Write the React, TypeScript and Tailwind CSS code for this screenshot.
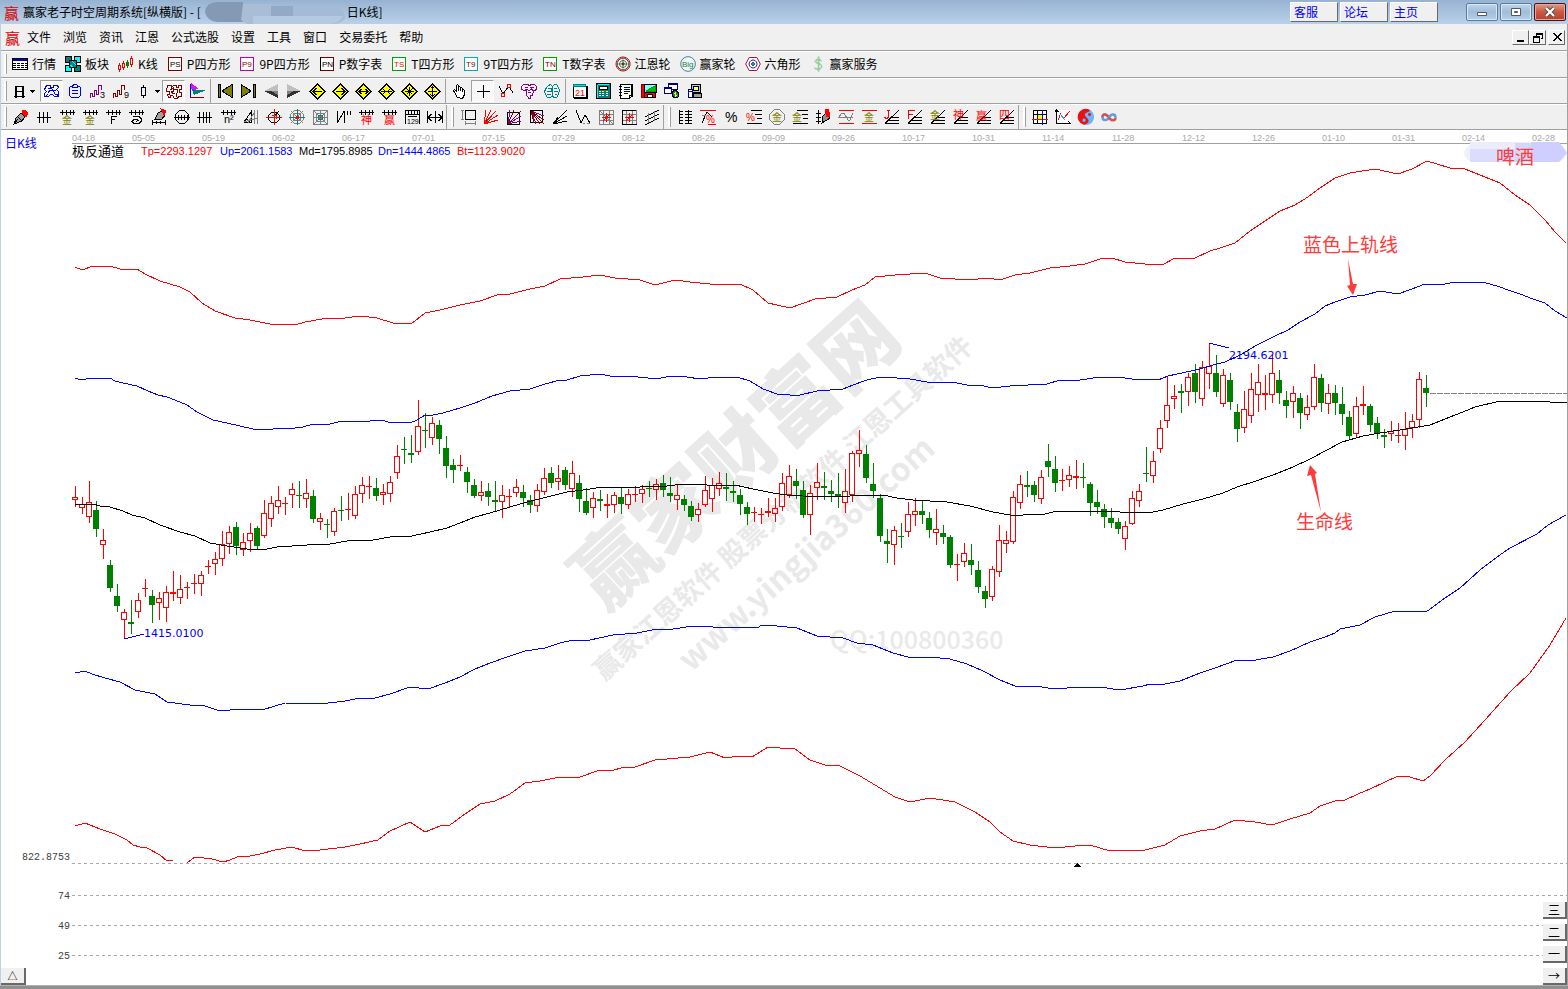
import React from "react";

type Shape = [stroke: string, d: string, fill?: string];
type Label = [text: string, x: number, y: number, size: number, color: string];
type IconDef = { p?: Shape[]; t?: Label[]; smooth?: boolean };

const K = "#000000";
const R = "#ff0000";
const OL = "#808000";
const G = "#808080";
const TE = "#008080";
const PU = "#800080";
const BR = "#800000";
const BL = "#0000ff";

const TICKS = "M1 3.5h15M3.5 1v5M7.5 1v5M11.5 1v5M14.5 1v5";
const DIAMOND: Shape = [K, "M8.5 1L16 8.5L8.5 16L1 8.5Z", "#ffff00"];
const FAN = "M1 14.5h14M1 14.5L15 1M5 11.5h10M8 8.5h7";
const PEN: Shape[] = [
  [K, "M1 15L3 9L8 4L12 8L9 12Z", "#a0a0a0"],
  [K, "M1 15L5 10M5 8L9 12", "none"],
  [R, "M9 2L12 1L15 4L13 8L9 4Z", R],
];

const ICONS: Record<string, IconDef> = {
  // quote bar
  list: {
    p: [
      [K, "M.5 2.5h15v11H.5Z", "#ffffff"],
      ["#0000c0", "M1 3.5h14M1 4.5h14", "none"],
      [K, "M1 7.5h14M1 9.5h14M1 11.5h14", "none"],
      ["#ffffff", "M4.5 6v7M8.5 6v7M12.5 6v7", "none"],
    ],
  },
  blocks: {
    p: [
      [K, "M.5.5h6v6h-6Z", TE],
      [K, "M9.5.5h6v6h-6Z", "#00ffff"],
      [K, "M.5 9.5h6v6h-6Z", "#00ffff"],
      [K, "M9.5 9.5h6v6h-6Z", TE],
      [K, "M4.5 4.5h7v7h-7Z", "#008888"],
      ["#00ffff", "M7 5l4 4M5 9l3 2", "none"],
    ],
  },
  kline: {
    p: [
      [R, "M.5 9.5h2v4h-2ZM1.5 7v2M1.5 14v2", "#fff"],
      [R, "M4.5 7.5h2v4h-2ZM5.5 5v2M5.5 12v2", "#fff"],
      ["#008000", "M9.5 4v8", "none"],
      ["#008000", "M8.5 6.5h2v3h-2Z", "#008000"],
      [R, "M12.5 2.5h2v6h-2ZM13.5 0v2M13.5 9v2", "#fff"],
    ],
  },
  PS: { p: [[BR, "M1.5 1.5h13v13h-13Z", "#fff"]], t: [["PS", 3, 11, 8, K]] },
  P9: { p: [["#c000c0", "M1.5 1.5h13v13h-13Z", "#fff"]], t: [["P9", 3, 11, 8, BR]] },
  PN: { p: [[BR, "M1.5 1.5h13v13h-13Z", "#fff"], [K, "M1.5 1v14"]], t: [["PN", 3, 11, 8, K]] },
  TS: { p: [["#00a000", "M1.5 1.5h13v13h-13Z", "#fff"]], t: [["TS", 3, 11, 8, R]] },
  T9: { p: [["#00b0b0", "M1.5 1.5h13v13h-13Z", "#fff"]], t: [["T9", 3, 11, 8, BR]] },
  TN: { p: [["#00a000", "M1.5 1.5h13v13h-13Z", "#fff"]], t: [["TN", 3, 11, 8, BR]] },
  wheel: {
    smooth: true,
    p: [
      ["#8b1a1a", "M8 1a7 7 0 1 0 .1 0Z", "#f4f4f4"],
      ["#8b1a1a", "M8 2.2a5.8 5.8 0 1 0 .1 0Z"],
      ["#2e7d52", "M8 4.5a3.5 3.5 0 1 0 .1 0ZM8 3.5v9M3.5 8h9"],
      ["#8b1a1a", "M8 7a1 1 0 1 0 .1 0Z", "#8b1a1a"],
    ],
  },
  big: { smooth: true, p: [["#3c7fa8", "M8 .7a7.3 7.3 0 1 0 .1 0Z", "#f0f6f4"]], t: [["Big", 2, 11, 8, "#1e7b47"]] },
  hex: {
    smooth: true,
    p: [
      ["#a01830", "M4.2 1.5h7.6L15.3 8l-3.5 6.5H4.2L.7 8Z", "#fff"],
      ["#2020b0", "M8 4a4 4 0 1 0 .1 0Z"],
      ["#2020b0", "M8 6.5a1.5 1.5 0 1 0 .1 0Z", "#40a060"],
    ],
  },
  dollar: {
    smooth: true,
    p: [["#8fcb94", "M11.5 4.5C10 2.5 5 2.700 5 5.200S11.500 7.500 11.500 10.500S5.500 13.500 4.500 11.500M4.500 12.200C6 14.500 12.500 13.500 12 10M8.200.5v15M9 .5v15M11.500 5.200C9.500 3.500 5.500 3.500 6 5.800C7 7.500 11 7.500 12 9.500"]],
  },

  // navigation bar
  day: { p: [[K, "M4.5 3v12M5.5 3v12M11.5 3v12M12.5 3v12M4 3.5h9M4 8.5h9M3 13.5h11"]] },
  cloudBlue: {
    p: [[BL, "M2.5 2.5h4v2h3v-2h4l1 2l-2 2l2 2v3l-1 2h-3l-2-2h-2l-2 2h-4v-3l2-2l-2-2ZM4 5h3l2 2h3M4 10l2-3h3l2 4h3M1 14l3-3M15 14l-3-3"]],
  },
  clip: { p: [[BL, "M5.5 3.5h-2l-1 1v8l2 2h7l2-2v-8l-1-1h-2M5.5 4.5v-2l2-1h2l1 1v2ZM5 7.5h6M5 10.5h6"]] },
  wave3: { p: [[PU, "M.5 15v-5h2v3h2v-6h2v4h2v-9h3v3M11.5 2v5"]], t: [["3", 10, 15, 9, K]] },
  wave9: { p: [[BR, "M.5 15v-5h2v3h2v-6h2v4h2v-9h3v3M11.5 2v5"]], t: [["9", 11, 15, 9, K]] },
  candle: { p: [[K, "M5.5 4.5h4v8h-4ZM7.5 2v2M7.5 13v2"]] },
  cloudBrown: {
    p: [[BR, "M1.5 2.5h4v2l2-2h3v2h2v-2h3v4h-2v3h2v4h-3l-1 2h-3l-2-3h-2v2h-2l-1-3h2v-3h-3ZM4 7l3-2v3h-2l2 3M8 6h3l1 3l-2 2l1 3M7 10h2"]],
  },
  flag: { p: [["none", "M2 0L10 6H2Z", "#ff00ff"], ["none", "M3 6L16 7.500L5 12Z", TE], [BL, "M1.5 1v13"], [BR, "M1 14.5h14"]] },
  first: { p: [[K, "M1 1.5h2v13h-2Z", OL], [K, "M15 1.5L5 8l10 6.5Z", OL]] },
  last: { p: [[K, "M13 1.5h2v13h-2Z", OL], [K, "M1 1.5L11 8L1 14.5Z", OL]] },
  prev: { p: [["none", "M15 1L1 8h14Z", "#c0c0c0"], ["none", "M1 8l14 7V8Z", "#303030"], ["none", "M8 8h7v4Z", "#808080"]] },
  next: { p: [["none", "M1 1l14 7H1Z", "#c0c0c0"], ["none", "M15 8L1 15V8Z", "#303030"], ["none", "M1 8h7l-7 4Z", "#808080"]] },
  dLeft: { p: [DIAMOND, [K, "M4 8.5h9M7.5 5L4 8.5l3.5 3.500"]] },
  dRight: { p: [DIAMOND, [K, "M4 8.5h9M9.5 5l3.500 3.500l-3.500 3.500"]] },
  dBoth: { p: [DIAMOND, [K, "M3 8.5h11M6.5 6L4 8.5l2.500 2.500M10.5 6l2.500 2.500l-2.500 2.500"]] },
  dIn: { p: [DIAMOND, [K, "M3 8.5h11M5 6l2.500 2.500L5 11M12 6L9.500 8.500L12 11"]] },
  dStar: { p: [DIAMOND, [K, "M4 8.5h9M8.5 4v9M5.5 5.500l6 6M11.5 5.500l-6 6"]] },
  dFour: { p: [DIAMOND, [K, "M4 8.5h9M8.5 3v11M6.5 5.500l2-2l2 2M6.5 11.500l2 2l2-2"]] },
  hand: { p: [[K, "M5.5 14.5L2.5 9.5l-1-2l1-1l2 2v-6l1-1l1 1v5v-3l1-1l1 1v3v-2l1-1l1 1v3v-1l1-1l1 1v4l-2 4Z", "#fff"]] },
  cross: { p: [[K, "M8.5 2v13M2 8.5h13"]] },
  zigRed: { p: [[K, "M1 3l4 8l5-7l2 1l3 5"], [R, "M3.5 10.5h3v3h-3ZM9.5 1.5h3v3h-3Z"]] },
  cloudPurple: { p: [[PU, "M2.5 1.5h4l2 1l2-1h3l2 2v3l-2 1h-2l-1-2l-2 2l-3-1l-2 1l-3-1v-3ZM5.5 7v5l2 3h2v-3h2l1-4M4 4h3M9 4h4M7 9h3"]] },
  cloudTeal: { p: [[TE, "M4.5 2.5l2-1l2 2l2-2h2l2 3l1 3l-1 4l-2 3h-3l-1-2l-2 2h-3l-2-3l-1-3l2-4ZM4 5h3v3h-4M8.5 3v10M10 5h3M10 8h4M11 11h2M3 11h4"]] },
  cal: { p: [[K, "M1.5 3.5h13v11h-13Z", "#fff"], [TE, "M1.5 1.5h12v2h-12Z", "#00e0e0"], [K, "M15 3v13M2 15.5h13"]], t: [["21", 3, 13, 9, R]] },
  calc: { p: [[K, "M1.5.5h14v15h-14Z", TE], ["#00ffff", "M3 1.5h11M2.5 2v13"], [K, "M4.5 3.5h8v3h-8Z", "#ffffff"], ["#ffff00", "M4 8.5h2M7 8.5h2M11 8.5h2"], ["#fff", "M4 10.5h2M7 10.5h2M11 10.5h2M4 12.5h2M7 12.5h2M11 12.5h2"]] },
  note: { p: [[K, "M2.5 1.5h12v11l-3 3h-9Z", "#fff"], [K, "M1 3.5h3M1 6.5h3M1 9.5h3M1 12.5h3M11 15v-3h4M14.5 1v13M13.5 1v11"], ["#000080", "M6 4.5h6M6 6.5h6M6 8.5h6M6 10.5h4"]] },
  disk: { p: [[BR, "M.5 1.5h4v13h-4Z", R], [K, "M3.5 1.5h12v8h-12Z", "#80ffff"], ["#00a000", "M5 8l9-5v6Z", "#00c000"], [K, "M3.5 9.5h11v5h-11Z", R], [K, "M6.5 11.5h5v3h-5Z", "#fff"]] },
  screens: { p: [["#000080", "M4.5.5h9v6h-9Z", "#fff"], ["#000080", "M.5 4.5h7v6h-7Z", "#fff"], ["#000080", "M1 5.5h6M5 1.5h8"], [K, "M8 9l3-2l4 3l-1 4l-4 1l-2-3Z", TE], ["#ffff00", "M10 10l3 3M12 9l-1 5"]] },
  pc: { p: [[K, "M4.5 1.5h9v8h-9Z", "#c0c0c0"], [K, "M6.5 3.5h5v4h-5Z", "#ffff80"], ["#000080", "M1.5 6.5h4v8h-4Z", "#fff"], [K, "M6.5 10.5h8v4h-8Z", "#a0a0a0"], [BL, "M2 8.5h3"]] },

  // drawing bar
  pen: { p: PEN },
  ticks: { p: [[K, "M1 8.5h14M3.5 3v11M7.5 3v11M11.5 3v11"]] },
  tickGold: { p: [[K, TICKS]], t: [["金", 3, 15, 10, OL]] },
  tickF: { p: [[K, TICKS], [K, "M6.5 15v-8h5M6 10.5h4"]] },
  tickSpiral: { p: [[K, TICKS], [K, "M5 7.5h6l2 2v3l-2 2h-5l-2-2l2-2h3l1 1l-2 1"]] },
  penRuler: { p: [[K, "M4 10L7 4L11 2l3 4l-3 4Z", "#a0a0a0"], [R, "M10 0l5 2l-2 4Z", R], [K, "M1 13.5h14M1.5 11v5M5.5 12v3M9.5 12v3M14.5 11v5"]] },
  tickCircle: { p: [[K, "M5.5 1.5h5l4 4v5l-4 4h-5l-4-4v-5ZM0 8.5h16M4.5 6v5M7.5 6v5M10.5 6v5M13.5 6v5"]] },
  ticks2: { p: [[K, "M0 8.5h15M2.5 3v11M6.5 3v11M9.5 3v11M12.5 3v11"]] },
  n2: { p: [[K, TICKS]], t: [["n²", 4, 14, 11, K]] },
  triLines: { p: [[K, "M1 13L8 3v11M1 13h6l-4-3"], [G, "M5 14L12 2M11.5 1v14M14.5 1v14M1 13L14 9"]] },
  redCircle: { p: [[K, "M5.5 3.5h5l3 3v4l-3 3h-5l-3-3v-4ZM8 8L13 2"], [R, "M8.5 0v16M0 8.5h16M6 6h4v4"]] },
  web: { p: [[G, "M5.5 1.5h5l4 4v5l-4 4h-5l-4-4v-5ZM5.5 4.5h5l1 1v5l-1 1h-5l-1-1v-5ZM2 2l12 12M14 2L2 14"], [TE, "M8.5 0v16M0 8.5h16"], [R, "M7.5 7.500h2v2h-2Z", R]] },
  webSquare: { p: [[G, "M1.5 1.5h14v14h-14ZM4.5 4.5h8v8h-8ZM2 2l13 13M15 2L2 15M8.5 1v15M1 8.5h15"], [TE, "M6.5 6.5h4v4h-4Z"], [R, "M8 8.500h1"]] },
  nMarks: { p: [[K, "M2.5 2v12L9 2v12M12.5 2v4M15.5 2v4"]] },
  tickShen: { p: [[K, TICKS]], t: [["神", 3, 15, 11, R]] },
  tickYing: { p: [[K, TICKS]], t: [["赢", 3, 15, 11, R]] },
  ruler: { p: [[K, "M1.5 15V1.5h14V15M1 5.5h15M4.5 2v4M7.5 2v4M10.5 2v4M13.5 2v4M4 7.5h9"]], t: [["129", 3, 15, 7, K]] },
  span: { p: [[K, "M.5 2v12M15.5 2v12M8.5 2v12M1 8.5h14M4.5 5L1 8.500L4.500 12M11.5 5L15 8.500L11.500 12"]] },

  boxDims: { p: [[K, "M5.5 1.5h10v9h-10Z"], [G, "M1 1.5h3M1 10.5h3M2.5 2v8M5.5 12v4M15.5 12v4M6 14.5h9"]] },
  fanRed: { p: [[K, "M1 15L4 10"], [R, "M1 15L3 1M1 15L8 1M1 15L13 2M1 15L15 6M1 15L15 11"]] },
  fanBox: { p: [[K, "M1.5 3.5h12v12h-12Z"], [PU, "M2 15L4 1M2 15L15 7M2 15L15 12"], [BR, "M2 15L8 1M2 15L15 2"]] },
  fanBoxDown: { p: [[K, "M1.5 1.5h12v12h-12Z"], [PU, "M2 2l5 13M2 2l13 5"], [BR, "M2 2l13 13M2 2l9 13M2 2l13 9M2 2l3 12"]] },
  fanBlack: { p: [[K, "M1 15L15 1M1 15L15 7M1 15L15 12M1 15L6 8"]] },
  vZig: { p: [[K, "M1 1l5 13l4-8l5 8"], [G, "M8 14h2M12 14h3"]] },
  gridRed: { p: [[G, "M1.5 1.5h14v14h-14ZM1 5.5h15M1 11.5h15M5.5 1v15M11.5 1v15M2 2l13 13"], [R, "M8.5 4v9M4 8.5h9M5 12L12 5"]] },
  gridDark: { p: [[G, "M1 5.5h15M1 11.5h15M5.5 1v15M11.5 1v15M15.5 1v15"], [K, "M1.5 1v14.5h14M1 1.500h14"], [R, "M8.5 4v9M4 8.5h9M5 12L12 5"]] },
  slants: { p: [[K, "M1 8L15 1M1 12L15 5M1 16L15 9"], [G, "M4.5 4v10M10.5 2v10"]] },

  ladder: { p: [[K, "M2.5 1v14M11.5 1v14M2 2.5h4M2 5.5h4M2 8.5h4M2 11.5h4M2 14.5h4M8 2.5h7M8 5.5h7M8 8.5h7M8 11.5h7M8 14.5h7"]] },
  pctZ: { p: [[R, "M0 1.5h16M8 15.5h8"], [K, "M2 14L7 3l5 5"], [G, "M2 6h4"]], t: [["%", 6, 14, 10, R]] },
  pct: { t: [["%", 2, 13, 14, K]] },
  pctLines: { p: [[K, "M5 1.5h11M9 5.5h7M11 9.5h5M1 14.5h15"]], t: [["%", 0, 12, 10, R]] },
  goldCircle: { p: [[G, "M5.5.5h5l5 5v5l-5 5h-5l-5-5v-5Z"]], t: [["金", 3, 12, 10, OL]] },
  goldLines: { p: [[K, "M5 1.5h11M10 5.5h6M11 9.5h5M1 14.5h15"]], t: [["金", 0, 12, 10, OL]] },
  penLadder: { p: [[K, "M3.5 1v14M1 4.5h5M1 8.5h5M1 12.5h5"], [K, "M7 14l1-7l4-4l3 6Z", "#909090"], [R, "M10 1l3-1l2 7l-3 1Z", R]] },
  waveRed: { p: [[R, "M1 1.5h15M1 14.5h15"], [G, "M0 9l4-5h2l4 7h2l3-7M1 8.5h14"]] },
  goldRed: { p: [[R, "M1 1.5h15M1 14.5h15"]], t: [["金", 3, 12, 10, OL]] },
  fanJ: { p: [[K, FAN], [R, "M4.500 1v7l-1 1h-2l-1-1M3 1.500h3"]] },
  fanF: { p: [[K, FAN], [R, "M1.5 10V1.5h6M1 5.5h5"]] },
  fanGold: { p: [[K, FAN]], t: [["金", 0, 10, 10, OL]] },
  fanShen: { p: [[K, FAN]], t: [["神", 0, 10, 11, R]] },
  fanYing: { p: [[K, FAN]], t: [["赢", 0, 11, 11, R]] },
  fanFour: { p: [[K, FAN]], t: [["四", 0, 10, 11, R]] },

  table: { p: [[K, "M1.5 1.5h13v13h-13Z", "#fff"], [K, "M1 5.5h14M5.500 1v14"], ["#ffff00", "M6.5 6.5h3v3h-3Z", "#ffff00"], [R, "M0 10.5h16"], [BL, "M10.5 1v15"]] },
  plot: { p: [["#fff", "M1 1h14v14H1Z", "#fff"], [K, "M1.5 1v13.5h14M0 3l1.500-2l2 2M13 12l2.500 2.500"], [R, "M3 11l3-7M9 9l6-7"], ["#4090e0", "M5 5l5 6"]] },
  taiji: {
    smooth: true,
    p: [
      ["none", "M8 0a8 8 0 1 0 .1 0Z", "#6ab4ff"],
      ["none", "M11 .6A8 8 0 1 0 6 15.700C11 14.500 11.500 11.500 9.500 9.500S5.500 5.500 8 4S13 3 11 .6Z", "#ee1010"],
      ["none", "M11.500 4a1.500 1.500 0 1 0 .1 0Z", "#ee1010"],
      ["none", "M6 9.500a1.700 1.700 0 1 0 .1 0Z", "#6ab4ff"],
    ],
  },
};

function Icon({ name }: { name: string }) {
  if (name === "infinity") {
    return (
      <svg className="size-4 shrink-0" viewBox="0 0 16 16" fill="none" strokeWidth="2.500" aria-hidden="true">
        <path stroke="#5aa0e0" d="M8 8.500C6 5 1.500 4 1.500 8S6 12 8 8.500" />
        <path stroke="#e05050" d="M1.500 8C1.500 4.500 5.500 4.500 8 8.500S14.500 12 14.500 8.500" />
        <path stroke="#5aa0e0" d="M8 8.500C10 4.500 14.500 4.500 14.500 8.500" />
      </svg>
    );
  }
  const icon = ICONS[name];
  return (
    <svg className="size-4 shrink-0 overflow-visible" viewBox="0 0 16 16" shapeRendering={icon.smooth ? "auto" : "crispEdges"} aria-hidden="true">
      {icon.p?.map(([stroke, d, fill], i) => (
        <path key={i} d={d} stroke={stroke} fill={fill ?? "none"} />
      ))}
      {icon.t?.map(([text, x, y, size, color]) => (
        <text key={text} x={x} y={y} fontSize={size} fill={color} className="font-['Liberation_Sans','Noto_Sans_CJK_SC',sans-serif]">
          {text}
        </text>
      ))}
    </svg>
  );
}

function Logo() {
  return <span className="w-[15px] shrink-0 text-[15px] leading-none text-[#d80000]" aria-hidden="true">赢</span>;
}

function Grip() {
  return <span className="h-5 w-[3px] shrink-0 border-r border-[#a0a0a0] bg-white" />;
}

function ToolButton({ name, active }: { name: string; active?: boolean }) {
  return (
    <button
      type="button"
      aria-label={name}
      className={
        active
          ? "flex h-[22px] w-[23px] shrink-0 items-center justify-center border border-t-[#a0a0a0] border-r-white border-b-white border-l-[#a0a0a0] bg-[#f8f8f8]"
          : "flex h-[22px] w-[23px] shrink-0 items-center justify-center"
      }
    >
      <Icon name={name} />
    </button>
  );
}

function DropArrow({ label }: { label: string }) {
  return (
    <button type="button" aria-label={label} className="flex w-[7px] shrink-0 justify-start">
      <svg className="h-[3px] w-[5px]" viewBox="0 0 5 3" shapeRendering="crispEdges" aria-hidden="true">
        <path d="M0 0h5L2.500 3Z" />
      </svg>
    </button>
  );
}

const MENUS = ["文件", "浏览", "资讯", "江恩", "公式选股", "设置", "工具", "窗口", "交易委托", "帮助"];

const QUOTES = [
  ["list", "行情"],
  ["blocks", "板块"],
  ["kline", "K线"],
  ["PS", "P四方形"],
  ["P9", "9P四方形"],
  ["PN", "P数字表"],
  ["TS", "T四方形"],
  ["T9", "9T四方形"],
  ["TN", "T数字表"],
  ["wheel", "江恩轮"],
  ["big", "赢家轮"],
  ["hex", "六角形"],
  ["dollar", "赢家服务"],
];

const NAV = [
  ["first", "last", "prev", "next", "dLeft", "dRight", "dBoth", "dIn", "dStar", "dFour"],
  ["hand", "cross", "zigRed", "cloudPurple", "cloudTeal"],
  ["cal", "calc", "note", "disk", "screens", "pc"],
];

const DRAW = [
  ["pen", "ticks", "tickGold", "tickGold", "tickF", "tickSpiral", "penRuler", "tickCircle", "ticks2", "n2", "triLines", "redCircle", "web", "webSquare", "nMarks", "tickShen", "tickYing", "ruler", "span"],
  ["boxDims", "fanRed", "fanBox", "fanBoxDown", "fanBlack", "vZig", "gridRed", "gridDark", "slants"],
  ["ladder", "pctZ", "pct", "pctLines", "goldCircle", "goldLines", "penLadder", "waveRed", "goldRed", "fanJ", "fanF", "fanGold", "fanShen", "fanYing", "fanFour"],
  ["table", "plot", "taiji", "infinity"],
];

const DATES = [
  "05-05", "05-19", "06-02", "06-17", "07-01", "07-15", "07-29", "08-12", "08-26", "09-09", "09-26",
  "10-17", "10-31", "11-14", "11-28", "12-12", "12-26", "01-10", "01-31", "02-14", "02-28",
];

// one bar per trading day: direction, high, body top, body bottom, low
const BARS = `
r486,497,500,507 r497,504,508,514 r481,502,517,523 g501,510,529,537 r529,540,545,559 g560,565,588,592
g584,596,606,612 r609,612,620,639 g600,622,624,634 r593,600,612,618 r579,588,589,597 g590,596,605,623
r592,598,603,620 r586,592,608,622 r571,592,594,601 r575,589,598,604 r582,587,588,599 r574,583,584,594
r571,575,584,596 r560,566,567,574 r552,559,564,575 r531,544,559,566 r526,532,544,554 g522,527,546,555
r533,542,550,556 r523,533,541,552 g526,528,546,549 r500,513,536,538 r496,503,519,527 r486,500,507,514
r497,503,504,515 r483,489,495,508 g481,495,496,508 r479,493,499,508 g490,496,519,523 r513,518,522,530
g519,524,525,538 r508,511,532,536 g496,510,511,521 r493,509,510,520 r486,494,516,519 r477,485,494,503
r476,486,487,499 g478,488,496,501 r484,492,495,505 r476,482,494,502 r445,456,473,479 g437,449,450,464
g435,453,455,463 r400,426,452,455 g413,430,431,448 r417,423,438,445 g420,425,439,454 g436,448,466,478
g459,465,470,483 r455,465,466,471 g467,472,482,493 g479,485,496,498 r481,492,496,501 g483,491,497,506
g481,500,502,511 r485,495,502,518 r489,496,497,508 r479,487,493,497 g485,492,498,507 g495,500,505,513
r484,490,506,512 r468,478,492,495 g467,473,483,488 r465,478,482,490 g467,470,485,490 r461,473,489,497
g475,483,499,512 g488,501,513,515 r492,498,508,518 g490,499,501,511 r494,504,506,518 r492,495,505,513
g488,497,504,514 r489,494,505,509 r486,494,495,502 r485,489,494,503 g481,488,489,497 r479,484,490,500
g475,483,490,497 g477,493,496,502 r485,495,500,510 g495,499,505,511 g501,506,517,521 r503,509,515,522
r476,490,505,507 r478,485,499,512 r472,483,489,496 g473,487,489,501 g481,491,493,502 g489,495,504,515
g502,507,514,525 r507,512,513,522 r508,514,515,524 r498,511,513,517 r498,508,514,522 r473,483,507,511
r465,476,495,498 g469,481,486,499 g481,490,515,518 r485,493,515,535 r463,482,488,500 g472,486,488,500
g480,491,494,502 g473,494,496,508 r469,491,503,513 r451,453,495,502 r430,450,454,467 g445,454,478,483
g463,484,491,498 g494,498,536,542 g529,541,544,563 r526,530,545,565 g523,536,537,548 r502,514,532,537
r498,511,515,526 g500,511,515,524 g512,518,530,538 r509,529,533,545 g525,533,537,544 g535,537,565,568
r554,564,565,581 r543,553,562,567 g544,560,565,575 g561,570,587,593 g586,591,599,608 r566,569,597,601
r525,540,572,577 r531,540,544,553 r491,497,542,544 r475,484,503,509 g471,485,487,497 g481,485,495,502
r470,477,499,504 g444,461,467,477 g456,469,483,492 r469,480,481,491 r466,475,480,487 r460,476,478,489
g463,477,478,488 g482,484,503,516 g490,502,507,514 g504,509,517,528 g508,518,523,528 g518,522,529,534
r521,526,539,550 r491,498,524,525 r484,491,501,507 g447,473,474,482 r451,461,476,483 r420,428,449,453
r377,405,421,428 r385,396,399,409 g384,391,393,413 r373,377,392,406 g364,373,392,403 r361,367,399,406
r343,366,374,389 g355,373,392,397 r369,375,404,407 g373,380,402,410 g404,412,429,442 r391,409,428,433
r373,389,416,423 r364,382,395,412 r375,393,395,410 r355,373,395,403 g370,380,393,404 g391,400,406,418
r386,393,402,418 g393,398,413,429 r395,407,415,420 r364,377,407,410 g374,378,403,412 r384,393,404,414
g385,393,403,415 g387,404,414,425 g411,417,436,439 r397,406,434,437 r386,404,406,415 g404,406,425,432
g417,423,433,439 g429,435,437,448 r421,431,434,441 r423,435,436,443 r412,429,436,450 r414,421,428,438
r372,379,420,428 g375,388,393,407`;

const CANDLES = BARS.trim().split(/\s+/).map((bar, i) => {
  const [high, top, bottom, low] = bar.slice(1).split(",").map(Number);
  return { x: 75 + i * 7, up: bar[0] === "r", high, top, bottom, low };
});

const CURVES = [
  {
    color: R,
    points:
      "75,267 82,270 93,266 110,266 120,269 137,269 145,274 160,281 180,287 190,292 202,303 215,311 235,318 250,320 270,324 295,325 305,322 322,319 345,318 360,316 377,318 393,323 411,324 425,313 440,310 460,305 480,301 497,295 510,294 530,289 545,286 560,279 583,277 600,275 615,278 640,280 655,285 675,280 690,282 720,285 740,284 753,290 768,303 790,308 815,299 837,297 852,290 865,285 875,277 895,275 925,273 940,278 970,280 987,278 1000,280 1015,275 1030,273 1050,268 1070,266 1085,264 1100,259 1112,258 1125,262 1145,264 1162,265 1175,258 1195,258 1210,251 1220,248 1235,243 1250,231 1265,221 1280,211 1295,205 1308,197 1320,188 1335,178 1350,173 1375,169 1398,174 1412,169 1427,161 1450,168 1465,169 1480,175 1500,183 1515,195 1530,205 1545,220 1555,232 1566,243",
  },
  {
    color: BL,
    points:
      "75,378 81,380 91,378 110,378 115,381 123,383 137,386 148,391 158,395 167,397 180,402 187,405 197,412 213,420 227,423 240,426 253,429 273,429 278,428 287,429 303,427 313,424 330,424 338,422 370,421 383,420 390,423 398,422 410,423 417,420 425,415 433,415 443,413 460,408 475,403 492,396 510,391 530,389 545,384 560,380 567,380 580,376 600,374 610,376 638,377 657,379 670,376 687,377 700,379 717,377 737,377 750,381 763,389 777,394 790,395 800,395 817,391 843,389 853,385 867,380 880,377 897,378 910,379 927,382 957,383 967,385 980,385 992,388 1010,386 1047,384 1060,380 1080,380 1100,377 1117,377 1140,380 1147,379 1158,380 1168,376 1200,369 1213,365 1225,362 1240,355 1257,345 1273,337 1288,330 1300,322 1315,314 1325,306 1335,302 1350,297 1365,295 1380,291 1398,294 1412,289 1425,284 1440,285 1455,282 1482,282 1490,284 1500,287 1508,290 1520,294 1533,299 1545,303 1555,311 1567,318",
  },
  {
    color: K,
    points:
      "75,504 93,504 100,506 110,507 123,511 132,515 145,518 160,525 180,532 195,536 210,543 227,546 247,549 267,549 277,547 307,545 330,544 347,541 373,540 390,537 412,536 430,532 447,528 460,523 475,517 490,513 510,507 527,502 547,497 567,492 583,490 603,487 640,487 667,486 683,484 707,485 735,485 753,489 773,493 787,495 803,496 850,496 863,495 883,495 897,498 913,500 947,502 970,506 993,512 1010,515 1023,515 1045,514 1053,512 1080,511 1100,511 1120,512 1133,513 1153,512 1163,510 1183,504 1203,499 1223,493 1237,487 1253,482 1273,475 1293,467 1310,459 1327,450 1342,442 1363,436 1380,433 1400,430 1430,425 1450,417 1463,412 1475,407 1500,401 1547,401 1550,402 1567,402",
  },
  {
    color: BL,
    points:
      "75,673 85,671 92,674 105,678 120,682 135,690 145,692 155,694 167,702 190,705 205,706 220,711 240,709 262,710 285,703 320,704 345,701 360,698 375,698 390,694 410,687 428,689 445,683 460,677 475,669 490,663 510,656 525,651 545,648 560,643 573,640 590,640 613,635 637,633 657,629 673,629 693,626 707,626 713,627 727,628 737,627 757,628 762,625 777,626 797,628 817,636 843,638 857,643 873,645 893,653 908,657 930,657 950,659 967,664 983,671 1000,680 1015,686 1035,686 1055,689 1080,687 1100,687 1120,690 1143,686 1150,684 1165,684 1180,681 1200,673 1215,668 1237,660 1250,661 1273,657 1290,651 1310,642 1325,637 1335,633 1340,629 1360,625 1375,617 1395,611 1410,611 1426,612 1445,598 1460,588 1480,570 1497,557 1510,548 1537,534 1548,525 1566,515",
  },
  {
    color: R,
    points:
      "75,826 85,823 100,829 115,834 127,840 133,845 140,847 147,848 160,855 167,861 173,860",
  },
  {
    color: R,
    points:
      "187,863 195,857 212,859 223,862 230,860 237,857 250,856 260,854 275,850 292,847 305,851 320,850 345,847 360,844 378,840 390,831 410,822 425,832 440,826 450,825 465,814 480,804 495,801 510,794 525,783 540,781 560,777 580,777 600,770 610,771 625,767 635,767 655,760 690,757 710,752 725,758 740,756 752,757 768,747 780,748 795,749 810,760 825,765 840,766 860,776 875,785 895,797 910,802 930,798 955,802 975,812 990,822 1000,832 1013,841 1030,845 1055,848 1075,846 1090,845 1110,851 1145,850 1165,845 1180,836 1200,831 1215,829 1235,820 1255,822 1272,825 1290,819 1310,813 1320,806 1335,801 1345,800 1358,794 1370,789 1385,782 1398,776 1410,777 1423,781 1430,776 1445,760 1465,742 1485,720 1510,692 1530,673 1550,645 1566,618",
  },
];

const LEVELS: [number, string][] = [
  [863, "822.8753"],
  [895, "74"],
  [925, "49"],
  [955, "25"],
];

const READOUTS = [
  { text: "Tp=2293.1297", color: "text-[#ff0000]" },
  { text: "Up=2061.1583", color: "text-[#0000ff]" },
  { text: "Md=1795.8985", color: "text-black" },
  { text: "Dn=1444.4865", color: "text-[#0000ff]" },
  { text: "Bt=1123.9020", color: "text-[#ff0000]" },
];

function Candle({ x, up, high, top, bottom, low }: (typeof CANDLES)[number]) {
  const color = up ? R : "#008000";
  if (bottom - top < 3 || !up) {
    return (
      <g fill={color}>
        <rect x={x} y={high} width="1" height={low - high} />
        <rect x={x - 3} y={top} width="6" height={bottom - top} />
      </g>
    );
  }
  return (
    <path
      d={`M${x} ${high}h1V${top}h2V${bottom}h-2V${low}h-1V${bottom}h-3V${top}h3ZM${x - 2} ${top + 1}V${bottom - 1}h4V${top + 1}Z`}
      fill={color}
      fillRule="evenodd"
    />
  );
}

function Watermark() {
  return (
    <g fill="#e9e9e9" className="font-['Noto_Sans_CJK_SC',sans-serif]">
      <g transform="translate(615 563) rotate(-42)">
        <text x="-41" y="30" fontSize="81" fontWeight="900">赢家财富网</text>
      </g>
      <g transform="translate(608 665) rotate(-42)">
        <text x="-14" y="10" fontSize="27" fontWeight="700">赢家江恩软件 股票分析软件 江恩工具软件</text>
      </g>
      <g transform="translate(688 662) rotate(-42)">
        <text x="-5" y="10" fontSize="32" fontWeight="700">www.yingjia360.com</text>
      </g>
      <text x="830" y="649" fontSize="25" fontWeight="500">QQ:100800360</text>
    </g>
  );
}

function Chart() {
  return (
    <svg className="block h-auto w-full" viewBox="1 130 1566 855" role="img" aria-label="日K线 极反通道">
      <Watermark />
      <g fontSize="9" fill="#a8a8a8" className="font-['Liberation_Sans',sans-serif]">
        <text x="72" y="141">04-18</text>
        {DATES.map((date, i) => (
          <text key={date} x={132 + i * 70} y="141">
            {date}
          </text>
        ))}
      </g>
      <path d="M72 143.500H1567" stroke="#a0a0a0" />
      <g fontSize="10" fill="#404040" textAnchor="end" className="font-['Liberation_Mono',monospace]">
        {LEVELS.map(([y, label]) => (
          <text key={label} x="70" y={label === "822.8753" ? y - 3 : y + 4}>
            {label}
          </text>
        ))}
      </g>
      <g shapeRendering="crispEdges" fill="none">
        {LEVELS.map(([y]) => (
          <line key={y} x1="72" x2="1567" y1={y + 0.5} y2={y + 0.5} stroke="#a8a8a8" strokeDasharray="3 3" />
        ))}
        <line x1="1430" x2="1567" y1="393.5" y2="393.5" stroke="#808080" strokeDasharray="6 1" />
        {CANDLES.map((c) => (
          <Candle key={c.x} {...c} />
        ))}
        {CURVES.map((c, i) => (
          <polyline key={i} points={c.points} stroke={c.color} />
        ))}
        <path d="M124 639L144 634M1209 343L1229 348" stroke={BL} />
        <path d="M1073 867h8L1077 863Z" fill={K} />
      </g>
      <g fontSize="11" fill={BL} className="font-['DejaVu_Sans',sans-serif]">
        <text x="144" y="637">1415.0100</text>
        <text x="1229" y="359">2194.6201</text>
      </g>
      <g>
        <path d="M1464 153a10 10 0 0 1 10-9h84a10 10 0 0 1 9 9a10 10 0 0 1-9 9h-84a10 10 0 0 1-10-9Z" fill="#f0f0ff" />
        <path d="M1470 149h60v13h-60Z" fill="#dcdcff" />
        <path d="M1470 142h60v7h-60Z" fill="#ececfa" />
        <path d="M1515 143h16v19h-16Z" fill="#d6d6fa" />
        <path d="M1531 142h28l8 11l-8 9h-28Z" fill="#ceceff" />
      </g>
      <g fill="#ff3b3b">
        <g fontSize="19" className="font-['Noto_Sans_CJK_SC',sans-serif]">
          <text x="1496" y="164">啤酒</text>
          <text x="1303" y="252">蓝色上轨线</text>
          <text x="1296" y="529">生命线</text>
        </g>
        <path d="M1348 259L1350 285L1347 286L1353 295L1357 284L1353 284Z" />
        <path d="M1310 465L1307 476L1311 475L1321 512L1315 474L1317 473Z" />
      </g>
    </svg>
  );
}

function CaptionButton({ label, close, children }: { label: string; close?: boolean; children: React.ReactNode }) {
  return (
    <button
      type="button"
      aria-label={label}
      className={
        close
          ? "flex h-[18px] w-8 items-center justify-center rounded-[2px] border border-[#4a1018] bg-linear-to-b from-[#e09a88] via-[#c85840] to-[#b84030] shadow-[inset_0_0_0_1px_#e8a898]"
          : "flex h-[18px] w-8 items-center justify-center rounded-[2px] border border-[#5a7aa0] bg-linear-to-b from-[#c0d6ee] via-[#a0bcd8] to-[#b4d0ec] shadow-[inset_0_0_0_1px_#d8e8f8]"
      }
    >
      <svg className="h-3 w-4" viewBox="0 0 16 12" aria-hidden="true">
        {children}
      </svg>
    </button>
  );
}

function MdiButton({ label, d }: { label: string; d: string }) {
  return (
    <button
      type="button"
      aria-label={label}
      className="flex h-[15px] w-[17px] items-center justify-center border border-t-white border-r-[#696969] border-b-[#696969] border-l-white bg-[#f0f0f0]"
    >
      <svg className="h-[11px] w-3" viewBox="0 0 12 11" shapeRendering="crispEdges" aria-hidden="true">
        <path d={d} fill="none" stroke="#000" />
      </svg>
    </button>
  );
}

const SIDE_BUTTONS = ["三", "二", "一", "→"];

export default function App() {
  return (
    <div className="w-full bg-white font-['Noto_Sans_CJK_SC',sans-serif] text-xs text-black">
      <header className="flex h-6 items-center justify-between bg-linear-to-b from-[#98b3d2] to-[#b9d1ea] pr-[2px] pl-1">
        <div className="flex items-center">
          <Logo />
          <h1 className="ml-1 whitespace-pre">赢家老子时空周期系统[纵横版] - [</h1>
          <svg className="h-6 w-[146px]" viewBox="0 0 146 24" aria-hidden="true">
            <path d="M4 12Q5 2 16 2H42V22H16Q6 21 4 12Z" fill="#8499b4" />
            <path d="M42 4h30v20H46l-6-4Z" fill="#a9bdd6" />
            <path d="M70 6h40v18H70Z" fill="#93a9c6" />
            <path d="M92 6h42q10 3 10 12q-4 6-12 6H92Z" fill="#a5bad6" />
            <path d="M52 16h90q-4 8-12 8H52Z" fill="#b4c9e2" />
          </svg>
          <span>日K线]</span>
        </div>
        <div className="flex items-center">
          <nav className="flex gap-[2px]">
            {["客服", "论坛", "主页"].map((label) => (
              <a
                key={label}
                href="#"
                className="flex h-5 w-12 items-center border border-t-white border-r-[#696969] border-b-[#696969] border-l-white bg-[#f0f0f0] pl-[3px] text-[#0000ff]"
              >
                {label}
              </a>
            ))}
          </nav>
          <div className="ml-7 flex gap-[2px]">
            <CaptionButton label="最小化">
              <path d="M3.500 6.500h9v3h-9Z" fill="#fff" stroke="#556" />
            </CaptionButton>
            <CaptionButton label="最大化">
              <path d="M3.500 2.500h9v7h-9Z" fill="#fff" stroke="#556" />
              <path d="M6.500 5.500h3v1h-3Z" fill="#789" stroke="#556" />
            </CaptionButton>
            <CaptionButton label="关闭" close>
              <path d="M4 2l8 8M12 2l-8 8" stroke="#555" strokeWidth="4" />
              <path d="M4 2l8 8M12 2l-8 8" stroke="#fff" strokeWidth="2" />
            </CaptionButton>
          </div>
        </div>
      </header>

      <div className="border-r border-l border-r-[#a0a0a0] border-l-[#b9d1ea]">
        <div className="bg-[#f0f0f0]">
          <div className="flex h-[27px] items-center justify-between border-b border-[#a0a0a0] pr-[2px] pl-1">
            <nav className="flex items-center gap-3">
              <span className="-mr-[5px] flex">
                <Logo />
              </span>
              {MENUS.map((label) => (
                <button key={label} type="button">
                  {label}
                </button>
              ))}
            </nav>
            <div className="flex">
              <MdiButton label="最小化窗口" d="M2 8.500h7M2 9.500h7" />
              <MdiButton label="还原窗口" d="M4.500 4V1.500h6v5H9M4 2.500h6M1.500 5h6v5h-6ZM1 4.500h7M1 5.500h7" />
              <span className="w-[2px]" />
              <MdiButton label="关闭窗口" d="M2 1l8 8M3 1l8 8M10 1l-8 8M11 1l-8 8" />
            </div>
          </div>

          <div className="flex h-[27px] items-center border-t border-b border-t-white border-b-[#a0a0a0] pb-[2px] pl-[3px]">
            <Grip />
            <div className="ml-[5px] flex gap-[9px]">
              {QUOTES.map(([icon, label]) => (
                <button key={label} type="button" className="flex items-center gap-1 whitespace-nowrap">
                  <Icon name={icon} />
                  {label}
                </button>
              ))}
            </div>
          </div>

          <div className="flex h-[26px] items-center border-t border-b border-t-white border-b-[#a0a0a0] pl-[3px]">
            <Grip />
            <div className="flex items-center">
              <ToolButton name="day" />
              <DropArrow label="周期" />
              <span className="w-[3px]" />
              <ToolButton name="cloudBlue" active />
              <ToolButton name="clip" />
              <ToolButton name="wave3" />
              <ToolButton name="wave9" />
              <ToolButton name="candle" />
              <DropArrow label="K线样式" />
              <ToolButton name="cloudBrown" active />
              <ToolButton name="flag" />
              {NAV.map((group) => (
                <div key={group[0]} className="flex items-center">
                  <span className="mx-[2px] h-6 w-px bg-[#a0a0a0]" />
                  {group.map((name) => (
                    <ToolButton key={name} name={name} active={name === "cross"} />
                  ))}
                </div>
              ))}
            </div>
          </div>

          <div className="flex h-[26px] items-center border-t border-b border-t-white border-b-[#a0a0a0] pl-[3px]">
            {DRAW.map((group, g) => (
              <div key={group[0]} className="flex items-center">
                <Grip />
                <span className="w-[2px]" />
                {group.map((name, i) => (
                  <ToolButton key={i} name={name} />
                ))}
                {g < DRAW.length - 1 && <span className="mr-1 h-6 w-px bg-[#a0a0a0]" />}
              </div>
            ))}
          </div>
        </div>

        <main className="relative">
          <Chart />
          <h2 className="absolute top-1 left-1 leading-[18px] text-[#0000ff]">日K线</h2>
          <div className="absolute top-3 left-[71px] flex items-center leading-[18px]">
            <span className="w-[69px] text-[13px]">极反通道</span>
            {READOUTS.map(({ text, color }) => (
              <span key={text} className={`w-[79px] font-['Liberation_Sans',sans-serif] text-[11px] ${color}`}>
                {text}
              </span>
            ))}
          </div>
          <button
            type="button"
            className="absolute bottom-0 left-0 flex h-[17px] w-[25px] items-center justify-center border-r-2 border-b-2 border-[#696969] bg-[#f0f0f0] text-[10px]"
          >
            △
          </button>
          <div className="absolute right-0 bottom-0 flex flex-col gap-[5px]">
            {SIDE_BUTTONS.map((label) => (
              <button
                key={label}
                type="button"
                className="flex h-[17px] w-6 items-center justify-center border-r-2 border-b-2 border-[#696969] bg-[#f0f0f0] leading-none"
              >
                {label}
              </button>
            ))}
          </div>
        </main>
      </div>
      <div className="h-1 border-t border-[#b0b0b0] bg-[#909090]" />
    </div>
  );
}
